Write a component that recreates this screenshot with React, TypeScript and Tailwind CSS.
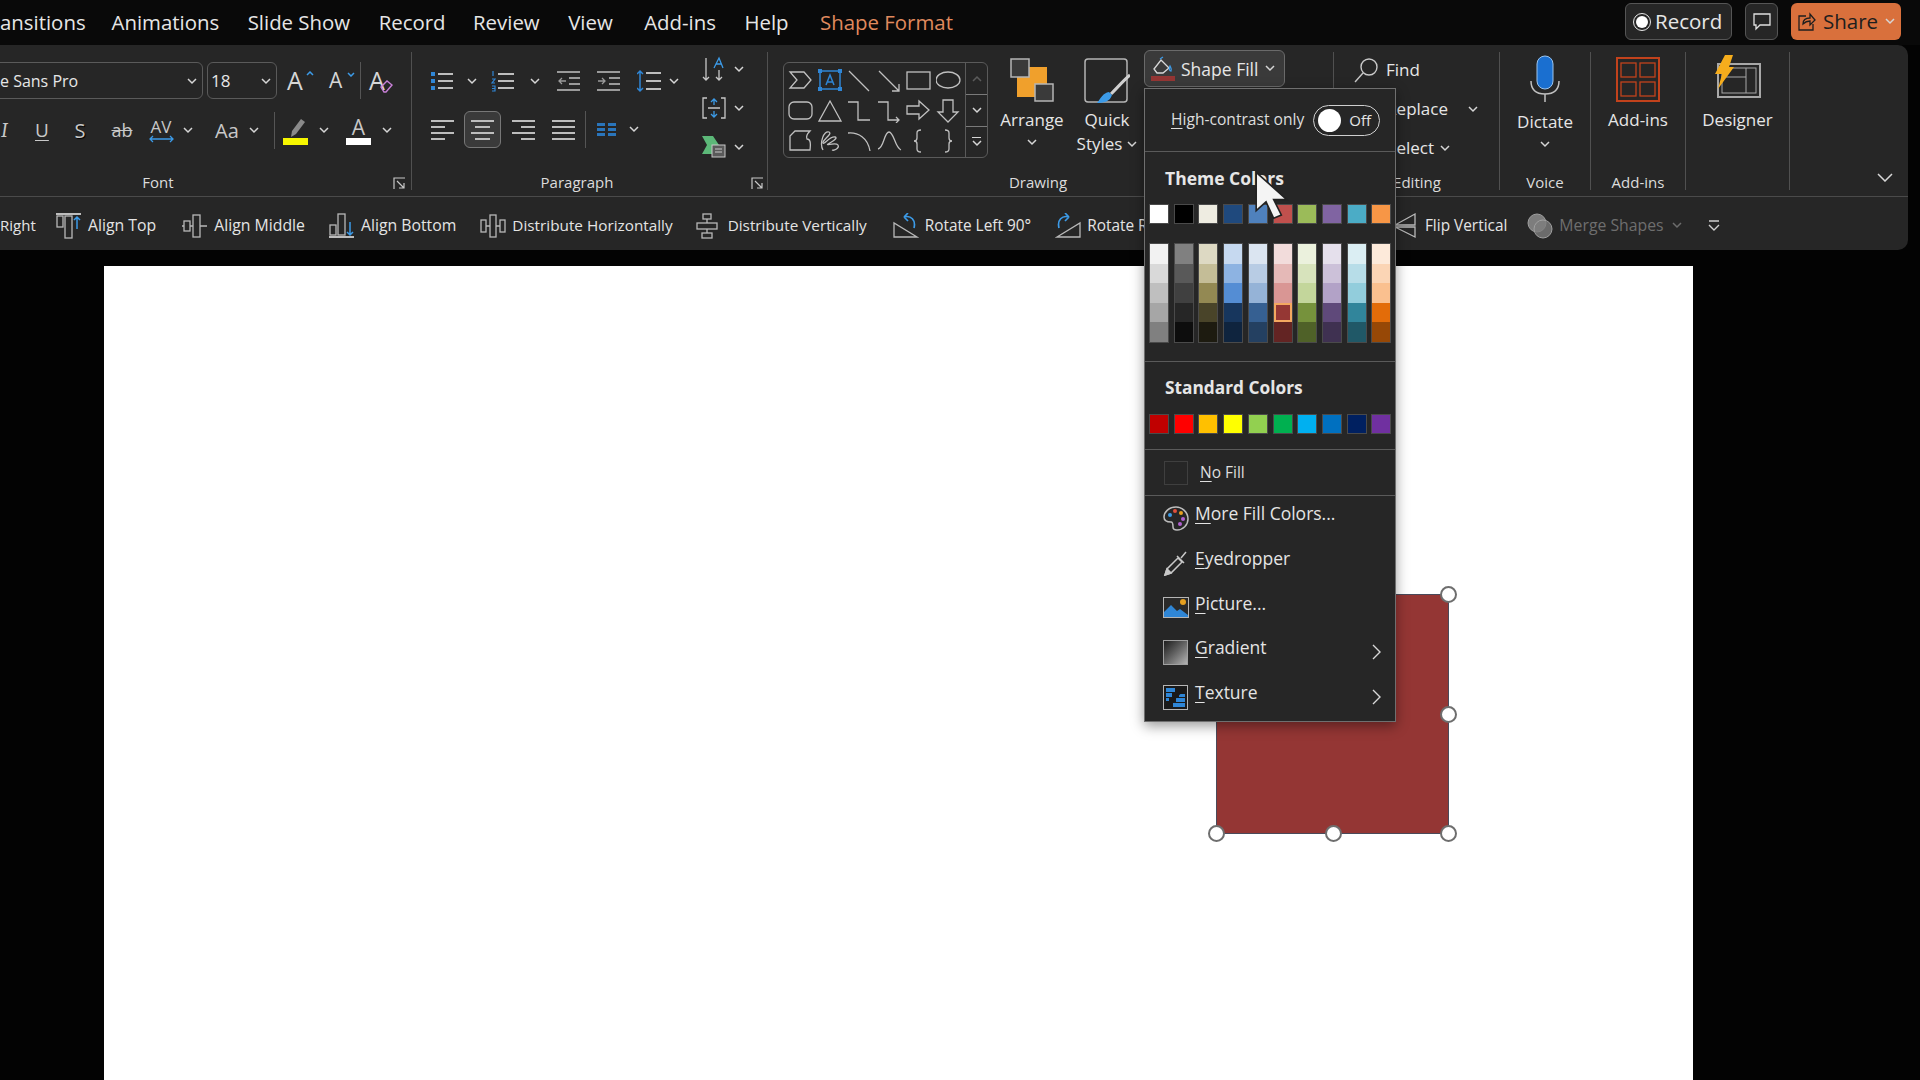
import { ReactNode } from "react";
import clsx from "clsx";

const Chev = ({ className }: { className?: string }) => (
  <svg width="10" height="7" viewBox="0 0 10 7" className={clsx("shrink-0", className)} fill="none" stroke="#d6d6d6" strokeWidth="1.5">
    <path d="M1 1l4 4 4-4" />
  </svg>
);

const Launcher = ({ className }: { className?: string }) => (
  <svg width="13" height="13" viewBox="0 0 13 13" className={clsx("absolute bottom-[0px]", className)} fill="none" stroke="#c8c8c8" strokeWidth="1.2">
    <path d="M1 12V1h11M4 4l7 7M11 6v5H6" />
  </svg>
);

const Group = ({ className, label, labelClass, children }: { className: string; label?: string; labelClass?: string; children: ReactNode }) => (
  <div className={clsx("relative h-[138px] shrink-0 border-r border-[#505050]", className)}>
    {children}
    {label && (
      <div className={clsx("absolute bottom-0 h-[16px] text-center text-[15px] leading-[16px] text-[#dcdcdc]", labelClass)}>{label}</div>
    )}
  </div>
);

const Lines = ({ rows }: { rows: [number, number][] }) => (
  <svg width="23" height="24" viewBox="0 0 23 24" stroke="#bdbdbd" strokeWidth="2" className="shrink-0">
    {rows.map(([a, b], i) => (
      <path key={i} d={`M${a} ${3 + i * 6}H${b}`} />
    ))}
  </svg>
);

const Bullets = () => (
  <svg width="24" height="24" viewBox="0 0 24 24" className="shrink-0">
    <path d="M0 3h4v4H0zM0 10h4v4H0zM0 17h4v4H0z" fill="#2f86d6" />
    <path d="M7 5h15M7 12h15M7 19h15" stroke="#bdbdbd" strokeWidth="2" />
  </svg>
);
const Numbers = () => (
  <svg width="24" height="24" viewBox="0 0 24 24" className="shrink-0">
    <path d="M2 2v5M1 10h3l-3 4h3M1 17h3v5H1M1 19.500h3" stroke="#2f86d6" strokeWidth="1.200" fill="none" />
    <path d="M7 5h16M7 12h16M7 19h16" stroke="#bdbdbd" strokeWidth="2" />
  </svg>
);
const Indent = ({ back }: { back?: boolean }) => (
  <svg width="23" height="24" viewBox="0 0 23 24" className="shrink-0" fill="none">
    <path d="M0 3h23M12 9h11M12 15h11M0 21h23" stroke="#9a9a9a" strokeWidth="2" />
    <path d={back ? "M9 12H2m3-3l-3 3 3 3" : "M1 12h7m-3-3l3 3-3 3"} stroke="#9a9a9a" strokeWidth="1.300" />
  </svg>
);
const LineSpacing = () => (
  <svg width="25" height="24" viewBox="0 0 25 24" className="shrink-0" fill="none">
    <path d="M3 2v20M0 5l3-3 3 3M0 19l3 3 3-3" stroke="#2f86d6" strokeWidth="1.500" />
    <path d="M9 4h15M9 12h15M9 20h15" stroke="#bdbdbd" strokeWidth="2" />
  </svg>
);

const Gallery: ReactNode[] = [
  <path d="M2 3h14l7 8-7 8H2l7-8z" />,
  <g>
    <rect x="2" y="2" width="20" height="18" stroke="#2f86d6" strokeWidth="1.500" />
    <path d="M0 0h4v4H0zM20 0h4v4h-4zM0 18h4v4H0zM20 18h4v4h-4z" fill="#2f86d6" stroke="none" />
    <path d="M8 16l4-10 4 10M9.500 13h5" stroke="#2f86d6" strokeWidth="1.500" />
  </g>,
  <path d="M2 2l20 20" />,
  <path d="M2 2l20 20m-7 0h7v-7" />,
  <rect x="1" y="3" width="23" height="17" />,
  <ellipse cx="12" cy="11" rx="12" ry="8" />,
  <rect x="1" y="3" width="23" height="17" rx="5" />,
  <path d="M12 2L1 22h22z" />,
  <path d="M1 3h10v18h12" />,
  <path d="M1 3h10v18h11m-3-3l3 3-3 3" />,
  <path d="M1 7h12V2l10 9-10 9v-5H1z" />,
  <path d="M7 1h10v12h5L12 23 2 13h5z" />,
  <path d="M2 21V7l5-5h15c-3 3-4 6-3 8 3 0 4 3 3 11z" />,
  <path d="M5 21C1 14 6 1 11 3c4 2-7 8-6 11 1 2 7-7 12-6 4 1-5 6-7 7-3 2 8-2 10 1 2 3-4 6-6 5" />,
  <path d="M1 4c10-1 20 5 22 18" />,
  <path d="M1 20C7 19 7 3 12 3s6 16 12 18" />,
  <path d="M15 1c-3 0-4 1-4 3v5c0 2-1 3-3 3 2 0 3 1 3 3v5c0 2 1 3 4 3" />,
  <path d="M9 1c3 0 4 1 4 3v5c0 2 1 3 3 3-2 0-3 1-3 3v5c0 2-1 3-4 3" />,
];

const toolIcons: Record<string, ReactNode> = {
  top: <><path d="M0 1h25" stroke="#bdbdbd" strokeWidth="2" /><rect x="1" y="3" width="6" height="11" /><rect x="9" y="3" width="7" height="22" /><path d="M21 16V4m-3 3l3-3 3 3" stroke="#3c9be8" strokeWidth="1.500" /></>,
  middle: <><path d="M0 13h25" /><rect x="2" y="8" width="6" height="10" fill="#262626" /><rect x="11" y="2" width="7" height="22" fill="#262626" /></>,
  bottom: <><path d="M0 24h25" stroke="#bdbdbd" strokeWidth="2" /><rect x="1" y="12" width="6" height="10" /><rect x="9" y="1" width="7" height="21" /><path d="M21 9v13m-3-3l3 3 3-3" stroke="#3c9be8" strokeWidth="1.500" /></>,
  dh: <><rect x="1" y="7" width="5" height="12" /><rect x="10" y="2" width="6" height="22" /><rect x="20" y="7" width="5" height="12" /><path d="M6 13h4m6 0h4" /></>,
  dv: <><rect x="7" y="1" width="8" height="5" /><rect x="1" y="10" width="20" height="6" /><rect x="6" y="20" width="10" height="5" /><path d="M11 6v4m0 6v4" /></>,
  rl: <><path d="M1 24L24 24 1 10z" /><path d="M11 4c7-2 12 3 10 11M11 4l4-4M11 4l4 4" stroke="#3c9be8" strokeWidth="1.700" /></>,
  rr: <><path d="M25 24L2 24 25 10z" /><path d="M14 4C7 2 2 7 4 15M14 4l-4-4M14 4l-4 4" stroke="#3c9be8" strokeWidth="1.700" /></>,
  fv: <><path d="M22 1L2 12h20zM22 24L2 14h20z" /></>,
};

const Tool = ({ icon, text, className, textClass = "text-[15.800px]" }: { icon: string; text: string; className: string; textClass?: string }) => (
  <div className={clsx("flex shrink-0 items-center gap-[6px]", className)}>
    <svg width="26" height="26" viewBox="0 0 26 26" fill="none" stroke="#b8b8b8" strokeWidth="1.300" className="shrink-0">
      {toolIcons[icon]}
    </svg>
    <span className={clsx("whitespace-nowrap text-[#e4e4e4]", textClass)}>{text}</span>
  </div>
);

const base = ["bg-[#ffffff]", "bg-[#000000]", "bg-[#eeece1]", "bg-[#1f497d]", "bg-[#4f81bd]", "bg-[#c0504d]", "bg-[#9bbb59]", "bg-[#8064a2]", "bg-[#4bacc6]", "bg-[#f79646]"];
const standard = ["bg-[#c00000]", "bg-[#ff0000]", "bg-[#ffc000]", "bg-[#ffff00]", "bg-[#92d050]", "bg-[#00b050]", "bg-[#00b0f0]", "bg-[#0070c0]", "bg-[#002060]", "bg-[#7030a0]"];
const shades = [
  ["bg-[#f2f2f2]", "bg-[#d9d9d9]", "bg-[#bfbfbf]", "bg-[#a6a6a6]", "bg-[#808080]"],
  ["bg-[#808080]", "bg-[#595959]", "bg-[#404040]", "bg-[#262626]", "bg-[#0d0d0d]"],
  ["bg-[#ddd9c3]", "bg-[#c4bd97]", "bg-[#938953]", "bg-[#494429]", "bg-[#1d1b10]"],
  ["bg-[#c6d9f0]", "bg-[#8db3e2]", "bg-[#548dd4]", "bg-[#17365d]", "bg-[#0f243e]"],
  ["bg-[#dbe5f1]", "bg-[#b8cce4]", "bg-[#95b3d7]", "bg-[#366092]", "bg-[#244061]"],
  ["bg-[#f2dcdb]", "bg-[#e5b9b7]", "bg-[#d99694]", "bg-[#953734]", "bg-[#632423]"],
  ["bg-[#ebf1dd]", "bg-[#d7e3bc]", "bg-[#c3d69b]", "bg-[#76923c]", "bg-[#4f6128]"],
  ["bg-[#e5e0ec]", "bg-[#ccc1d9]", "bg-[#b2a2c7]", "bg-[#5f497a]", "bg-[#3f3151]"],
  ["bg-[#dbeef3]", "bg-[#b7dde8]", "bg-[#92cddc]", "bg-[#31859b]", "bg-[#205867]"],
  ["bg-[#fdeada]", "bg-[#fbd5b5]", "bg-[#fac08f]", "bg-[#e36c09]", "bg-[#974806]"],
];

const Swatches = ({ colors }: { colors: string[] }) => (
  <div className="ml-[5px] grid w-[247px] grid-cols-10">
    {colors.map((c) => (
      <div key={c} className={clsx("h-[18px] w-[18px] outline outline-1 outline-[#4a4a4a]", c)} />
    ))}
  </div>
);

const Item = ({ icon, letter, rest, arrow }: { icon: ReactNode; letter: string; rest: string; arrow?: boolean }) => (
  <div className="flex h-[44.700px] items-center pl-[18px] pr-[13px]">
    <span className="mt-[6px] flex h-[25px] w-[26px] shrink-0 items-center">{icon}</span>
    <span className="ml-[6px] -translate-y-[2px] whitespace-nowrap text-[17.500px] text-[#e4e4e4]">
      <span className="underline underline-offset-[3px]">{letter}</span>
      {rest}
    </span>
    {arrow && (
      <svg width="10" height="16" viewBox="0 0 10 16" className="ml-auto mt-[5px]" fill="none" stroke="#d8d8d8" strokeWidth="1.400">
        <path d="M1 1l7 7-7 7" />
      </svg>
    )}
  </div>
);

const Handle = ({ className }: { className: string }) => (
  <div className={clsx("absolute h-[17px] w-[17px] rounded-full border-2 border-[#6e6e6e] bg-white", className)} />
);

export default function App() {
  return (
    <div className="relative flex h-screen w-full flex-col overflow-hidden bg-[#030303] font-['Open_Sans','Liberation_Sans',sans-serif] text-[#e6e6e6]">
      {/* tabs */}
      <div className="flex h-[45px] shrink-0 items-center bg-[#090909] text-[20.400px] leading-none">
        <nav className="flex items-center gap-[28.500px] whitespace-nowrap pb-[1px]">
          <span className="w-[83px]">ansitions</span>
          <span>Animations</span>
          <span>Slide Show</span>
          <span className="-mr-[1px]">Record</span>
          <span>Review</span>
          <span>View</span>
          <span className="ml-[3px]">Add-ins</span>
          <span>Help</span>
          <span className="ml-[3px] text-[#e08a5e]">Shape Format</span>
        </nav>
        <div className="ml-auto flex items-center pb-[2px] pr-[19px]">
          <div className="flex h-[37px] w-[107px] items-center gap-[4px] rounded-[6px] border border-[#555] bg-[#262626] pl-[7px]">
            <span className="flex h-[18px] w-[18px] items-center justify-center rounded-full border border-[#e6e6e6]">
              <span className="h-[12px] w-[12px] rounded-full bg-white" />
            </span>
            <span className="text-[20.500px] leading-none">Record</span>
          </div>
          <div className="ml-[13px] flex h-[37px] w-[33px] items-center justify-center rounded-[6px] border border-[#555] bg-[#262626]">
            <svg width="18" height="18" viewBox="0 0 18 18" fill="none" stroke="#e0e0e0" strokeWidth="1.300">
              <path d="M1 1h16v11H7l-4 4v-4H1z" />
            </svg>
          </div>
          <div className="ml-[13px] flex h-[37px] w-[110px] items-center rounded-[6px] bg-[#d9703c] pl-[7px] text-[#1e1e1e]">
            <svg width="18" height="20" viewBox="0 0 18 20" fill="none" stroke="#1e1e1e" strokeWidth="1.300">
              <path d="M8 4H1v14h14v-6M5 12c0-4 3-6 7-6V2l5 6-5 5V9c-3 0-5 1-7 3z" />
            </svg>
            <span className="ml-[7px] text-[20.500px] leading-none">Share</span>
            <Chev className="ml-[7px]" />
          </div>
        </div>
      </div>

      {/* ribbon */}
      <div className="mr-[12px] h-[205px] shrink-0 overflow-hidden rounded-r-[10px] bg-[#262626]">
        <div className="relative flex h-[152px] border-b border-[#4a4a4a] pt-[7px]">
          <Group className="w-[412px]" label="Font" labelClass="left-[128px] w-[60px]">
            <div className="mt-[10px] flex h-[37px] items-center">
              <div className="-ml-[10px] flex h-[37px] w-[213px] items-center rounded-[6px] border border-[#5a5a5a] pl-[9px] pr-[5px] pt-[1px] text-[16px]">
                <span className="whitespace-nowrap">e Sans Pro</span>
                <Chev className="ml-auto" />
              </div>
              <div className="ml-[4px] flex h-[37px] w-[70px] items-center rounded-[6px] border border-[#5a5a5a] pl-[3px] pr-[5px] pt-[1px] text-[17px]">
                18
                <Chev className="ml-auto" />
              </div>
              <div className="relative ml-[10px] w-[24px] text-[25px] leading-none text-[#d6d6d6]">
                A
                <svg width="8" height="5" viewBox="0 0 8 5" className="absolute -right-[3px] top-[3px]" fill="none" stroke="#3c9be8" strokeWidth="1.500"><path d="M1 4l3-3 3 3" /></svg>
              </div>
              <div className="relative ml-[18px] w-[21px] text-[21px] leading-none text-[#d6d6d6]">
                A
                <svg width="8" height="5" viewBox="0 0 8 5" className="absolute -right-[5px] top-[2px]" fill="none" stroke="#3c9be8" strokeWidth="1.500"><path d="M1 1l3 3 3-3" /></svg>
              </div>
              <div className="ml-[10px] h-[37px] w-px bg-[#555]" />
              <div className="relative ml-[8px] w-[24px] text-[25px] leading-none text-[#d6d6d6]">
                A
                <svg width="14" height="14" viewBox="0 0 14 14" className="absolute -right-[1px] bottom-[0px]" fill="none" stroke="#c77fd6" strokeWidth="1.400"><path d="M1 8l6-6 5 4-6 7H4z" /></svg>
              </div>
            </div>
            <div className="mt-[13px] flex h-[37px] items-center text-[#c8c8c8]">
              <span className="ml-[1px] w-[8px] font-serif text-[20px] italic">I</span>
              <span className="ml-[26px] w-[12px] text-center text-[19px] underline underline-offset-[3px]">U</span>
              <span className="ml-[27px] w-[12px] text-center text-[20px] [text-shadow:1px_1px_1px_#000]">S</span>
              <span className="ml-[24px] w-[24px] text-center text-[18px] line-through">ab</span>
              <div className="ml-[14px] flex w-[26px] flex-col items-center">
                <span className="text-[17px] leading-[17px]">AV</span>
                <svg width="25" height="8" viewBox="0 0 25 8" fill="none" stroke="#3c9be8" strokeWidth="1.300"><path d="M1 4h23M4 1L1 4l3 3M21 1l3 3-3 3" /></svg>
              </div>
              <Chev className="ml-[9px]" />
              <span className="ml-[22px] w-[26px] text-[20px]">Aa</span>
              <Chev className="ml-[8px]" />
              <div className="ml-[15px] h-[37px] w-px bg-[#555]" />
              <div className="ml-[8px] flex w-[25px] flex-col items-center">
                <svg width="22" height="21" viewBox="0 0 22 21" fill="#8a8a8a"><path d="M6 20l1-6L16 2l4 3-9 12z" /></svg>
                <div className="h-[7px] w-[25px] bg-[#f6f600]" />
              </div>
              <Chev className="ml-[11px]" />
              <div className="ml-[17px] flex w-[25px] flex-col items-center">
                <span className="text-[21px] leading-[21px]">A</span>
                <div className="h-[7px] w-[25px] bg-white" />
              </div>
              <Chev className="ml-[11px]" />
            </div>
            <Launcher className="left-[393px]" />
          </Group>

          <Group className="w-[356px]" label="Paragraph" labelClass="left-[115px] w-[100px]">
            <div className="flex h-[97px]">
              <div className="ml-[19px] w-[262px]">
                <div className="mt-[17px] flex h-[24px] items-center">
                  <Bullets />
                  <Chev className="ml-[12px]" />
                  <div className="ml-[14px]"><Numbers /></div>
                  <Chev className="ml-[15px]" />
                  <div className="ml-[17px]"><Indent back /></div>
                  <div className="ml-[17px]"><Indent /></div>
                  <div className="ml-[17px]"><LineSpacing /></div>
                  <Chev className="ml-[7px]" />
                </div>
                <div className="mt-[18px] flex h-[37px] items-center">
                  <Lines rows={[[0, 23], [0, 14], [0, 23], [0, 14]]} />
                  <div className="ml-[10px] flex h-[37px] w-[37px] items-center justify-center rounded-[6px] border border-[#777] bg-[#3a3a3a]">
                    <Lines rows={[[0, 23], [4, 19], [0, 23], [4, 19]]} />
                  </div>
                  <div className="ml-[11px]"><Lines rows={[[0, 23], [9, 23], [0, 23], [9, 23]]} /></div>
                  <div className="ml-[17px]"><Lines rows={[[0, 23], [0, 23], [0, 23], [0, 23]]} /></div>
                  <div className="ml-[10px] h-[37px] w-px bg-[#555]" />
                  <svg width="20" height="14" viewBox="0 0 20 14" className="ml-[11px]" fill="#2a75bb">
                    <path d="M0 0h8v3H0zM0 5h8v3H0zM0 10h8v3H0zM11 0h8v3h-8zM11 5h8v3h-8zM11 10h8v3h-8z" />
                  </svg>
                  <Chev className="ml-[12px]" />
                </div>
              </div>
              <div className="ml-[9px] flex w-[60px] flex-col">
                <div className="mt-[4px] flex h-[26px] items-center">
                  <svg width="22" height="26" viewBox="0 0 22 26" fill="none">
                    <path d="M4 2v22M1 21l3 3 3-3M17 14v10M14 21l3 3 3-3" stroke="#c8c8c8" strokeWidth="1.300" />
                    <path d="M12 12l5-10 4 10M13.500 8h6" stroke="#3c9be8" strokeWidth="1.300" />
                  </svg>
                  <Chev className="ml-[10px]" />
                </div>
                <div className="mt-[15px] flex h-[22px] items-center">
                  <svg width="24" height="22" viewBox="0 0 24 22" fill="none">
                    <path d="M5 1H1v20h4M19 1h4v20h-4M6 11h12" stroke="#c8c8c8" strokeWidth="1.300" />
                    <path d="M12 2v6M9 5l3-3 3 3M12 20v-6M9 17l3 3 3-3" stroke="#3c9be8" strokeWidth="1.300" />
                  </svg>
                  <Chev className="ml-[8px]" />
                </div>
                <div className="mt-[17px] flex h-[22px] items-center">
                  <svg width="24" height="22" viewBox="0 0 24 22" fill="none">
                    <path d="M0 0h11l6 9-6 9H0l5-9z" fill="#5cb878" />
                    <rect x="10" y="9" width="13" height="12" fill="#5a5a5a" stroke="#c8c8c8" />
                    <path d="M13 13h7M13 16h7" stroke="#c8c8c8" />
                  </svg>
                  <Chev className="ml-[8px]" />
                </div>
              </div>
            </div>
            <Launcher className="left-[339px]" />
          </Group>

          <Group className="w-[566px]" label="Drawing" labelClass="left-[220px] w-[100px]">
            <div className="mt-[10px] flex h-[96px]">
              <div className="ml-[15px] flex h-[96px] w-[205px] rounded-[6px] border border-[#5a5a5a]">
                <div className="grid w-[183px] grid-cols-6 content-center gap-y-[6px] pl-[4px] pt-[2px]">
                  {Gallery.map((s, i) => (
                    <svg key={i} width="25" height="24" viewBox="0 0 25 24" fill="none" stroke="#c0c0c0" strokeWidth="1.300">
                      {s}
                    </svg>
                  ))}
                </div>
                <div className="flex w-[22px] flex-col border-l border-[#5a5a5a]">
                  <div className="flex h-[31px] items-center justify-center"><Chev className="rotate-180 opacity-30" /></div>
                  <div className="flex h-[33px] items-center justify-center border-y border-[#7a7a7a]"><Chev /></div>
                  <div className="flex flex-1 flex-col items-center justify-center gap-[2px]"><div className="h-px w-[9px] bg-[#d6d6d6]" /><Chev /></div>
                </div>
              </div>
              <div className="ml-[22px] flex w-[44px] flex-col items-center">
                <svg width="44" height="44" viewBox="0 0 44 44" className="-mt-[4px] shrink-0">
                  <rect x="7" y="9" width="30" height="30" fill="#f0a02c" />
                  <rect x="1" y="1" width="18" height="18" fill="#3a3a3a" stroke="#b5b5b5" strokeWidth="1.500" />
                  <rect x="25" y="26" width="18" height="17" fill="#3a3a3a" stroke="#b5b5b5" strokeWidth="1.500" />
                </svg>
                <span className="mt-[8px] text-[17px] leading-[20px]">Arrange</span>
                <Chev className="mt-[9px]" />
              </div>
              <div className="ml-[30px] flex w-[46px] flex-col items-center">
                <svg width="46" height="46" viewBox="0 0 46 46" className="-mt-[4px] shrink-0" fill="none">
                  <rect x="1" y="1" width="42" height="43" rx="3" stroke="#b5b5b5" strokeWidth="1.500" />
                  <path d="M46 17C40 22 33 30 27 36" stroke="#d0d0d0" strokeWidth="3" />
                  <path d="M13 45c6 0 13-1 15-8l-3-3c-6 1-8 6-12 11z" fill="#3c9be8" />
                </svg>
                <span className="mt-[6px] text-[17px] leading-[20px]">Quick</span>
                <span className="mt-[4px] flex items-center gap-[5px] whitespace-nowrap text-[17px] leading-[20px]">Styles<Chev /></span>
              </div>
            </div>
          </Group>

          <Group className="w-[166px]" label="Editing" labelClass="left-[53px] w-[60px]">
            <div className="ml-[20px] mt-[4px] flex h-[28px] items-center">
              <svg width="24" height="25" viewBox="0 0 24 25" fill="none" stroke="#c8c8c8" strokeWidth="1.400"><circle cx="15" cy="9" r="8" /><path d="M9 15l-8 9" /></svg>
              <span className="ml-[8px] text-[17px]">Find</span>
            </div>
            <div className="mt-[13px] flex h-[24px] items-center justify-end pr-[21px] text-[17px]">Replace<Chev className="ml-[20px]" /></div>
            <div className="mt-[15px] flex h-[24px] items-center justify-end pr-[49px] text-[17px]">Select<Chev className="ml-[6px]" /></div>
          </Group>

          <Group className="w-[91px]" label="Voice" labelClass="left-0 w-[90px]">
            <div className="flex flex-col items-center">
              <svg width="30" height="48" viewBox="0 0 30 48" className="mt-[3px]" fill="none">
                <rect x="7" y="1" width="16" height="33" rx="8" fill="#1a6fd0" stroke="#9cc4ec" />
                <path d="M1 26c0 10 6 13 14 13s14-3 14-13M15 39v8" stroke="#c0c0c0" strokeWidth="1.500" />
              </svg>
              <span className="mt-[9px] text-[17px] leading-[20px]">Dictate</span>
              <Chev className="mt-[9px]" />
            </div>
          </Group>

          <Group className="w-[95px]" label="Add-ins" labelClass="left-0 w-[94px]">
            <div className="flex flex-col items-center">
              <svg width="44" height="45" viewBox="0 0 44 45" className="mt-[5px]" fill="none" stroke="#c2421c">
                <rect x="1" y="1" width="42" height="43" strokeWidth="2" />
                <rect x="5" y="6" width="15" height="14" strokeWidth="1.300" />
                <rect x="24" y="6" width="15" height="14" strokeWidth="1.300" />
                <rect x="5" y="25" width="15" height="14" strokeWidth="1.300" />
                <rect x="24" y="25" width="15" height="14" strokeWidth="1.300" />
              </svg>
              <span className="mt-[8px] text-[17px] leading-[20px]">Add-ins</span>
            </div>
          </Group>

          <Group className="w-[104px]">
            <div className="flex flex-col items-center">
              <svg width="48" height="44" viewBox="0 0 48 44" className="mt-[3px]" fill="none">
                <rect x="4" y="9" width="42" height="33" stroke="#a8a8a8" strokeWidth="2" />
                <rect x="8" y="13" width="34" height="25" stroke="#a8a8a8" />
                <path d="M32 13v25M8 22h24" stroke="#a8a8a8" />
                <path d="M11 0h8l-4 12h5L4 34l4-15H1z" fill="#f6ad1c" />
              </svg>
              <span className="mt-[11px] text-[17px] leading-[20px]">Designer</span>
            </div>
          </Group>
          <svg width="16" height="9" viewBox="0 0 16 9" className="absolute right-[15px] top-[128px]" fill="none" stroke="#d8d8d8" strokeWidth="1.500"><path d="M1 1l7 7 7-7" /></svg>
        </div>

        <div className="flex h-[53px] items-center pt-[4px]">
          <span className="w-[32px] text-[15px] text-[#e4e4e4]">Right</span>
          <Tool icon="top" text="Align Top" className="ml-[24px]" />
          <Tool icon="middle" text="Align Middle" className="ml-[26px]" />
          <Tool icon="bottom" text="Align Bottom" className="ml-[24px]" />
          <Tool icon="dh" text="Distribute Horizontally" className="ml-[24px]" textClass="text-[15.300px]" />
          <Tool icon="dv" text="Distribute Vertically" className="ml-[23px]" textClass="text-[15.300px]" />
          <Tool icon="rl" text="Rotate Left 90°" className="ml-[26px]" textClass="text-[15.400px]" />
          <Tool icon="rr" text="Rotate Right 90°" className="ml-[24px]" textClass="text-[15.400px]" />
          <Tool icon="fv" text="Flip Vertical" className="ml-[190px]" textClass="text-[15.400px]" />
          <div className="ml-[20px] flex shrink-0 items-center gap-[6px] text-[15.800px] text-[#6e6e6e]">
            <svg width="26" height="26" viewBox="0 0 26 26" fill="#7d7d7d" stroke="#a0a0a0"><circle cx="10" cy="10" r="9" /><circle cx="16" cy="16" r="9" fillOpacity="0.800" /></svg>
            <span className="whitespace-nowrap">Merge Shapes</span>
            <Chev className="ml-[2px] opacity-40" />
          </div>
          <svg width="12" height="12" viewBox="0 0 12 12" className="ml-[26px]" fill="none" stroke="#d0d0d0" strokeWidth="1.400"><path d="M1 1h10M1 5l5 5 5-5" /></svg>
        </div>
      </div>

      {/* slide */}
      <div className="min-h-0 flex-1 pl-[104px] pt-[16px]">
        <div className="relative h-full w-[1589px] bg-white">
          <div className="absolute left-[1112px] top-[328px] h-[240px] w-[233px] border border-[#4a4a5a] bg-[#943634]">
            <Handle className="-left-[9px] -top-[9px]" />
            <Handle className="-right-[9px] -top-[9px]" />
            <Handle className="-right-[9px] top-[111px]" />
            <Handle className="-left-[9px] -bottom-[9px]" />
            <Handle className="left-[108px] -bottom-[9px]" />
            <Handle className="-right-[9px] -bottom-[9px]" />
          </div>
        </div>
      </div>

      {/* shape fill button + dropdown */}
      <div className="absolute left-[1144px] top-[50px] flex h-[37px] w-[141px] items-center rounded-[6px] border border-[#6a6a6a] bg-[#3a3a3a]">
        <svg width="24" height="25" viewBox="0 0 24 25" className="ml-[6px]" fill="none">
          <path d="M3 13l7-9 8 8-6 5H6z" stroke="#d8d8d8" strokeWidth="1.300" />
          <path d="M9 3l3-2M19 10c1 2 2 3 1 5-2 0-2-3-1-5z" stroke="#3c9be8" strokeWidth="1.300" />
          <rect x="0" y="20" width="24" height="5" fill="#943634" />
        </svg>
        <span className="ml-[6px] mt-[2px] whitespace-nowrap text-[17.500px]">Shape Fill</span>
        <Chev className="ml-[7px]" />
      </div>

      <div className="absolute left-[1144px] top-[88px] flex h-[634px] w-[252px] flex-col border border-[#6f6f6f] bg-[#262626] shadow-[0_4px_12px_rgba(0,0,0,0.4)]">
        <div className="flex h-[63px] shrink-0 items-center border-b border-[#5a5a5a] pl-[26px]">
          <span className="whitespace-nowrap text-[15.600px] text-[#dedede]">
            <span className="underline underline-offset-[3px]">H</span>igh-contrast only
          </span>
          <div className="ml-[9px] flex h-[31px] w-[67px] items-center rounded-full border border-[#cfcfcf] pl-[4px]">
            <span className="h-[23px] w-[23px] rounded-full bg-white" />
            <span className="ml-[8px] text-[15px]">Off</span>
          </div>
        </div>
        <div className="h-[210px] shrink-0 border-b border-[#5a5a5a]">
          <div className="ml-[20px] mt-[15px] h-[22px] text-[17.500px] font-bold leading-[22px]">Theme Colors</div>
          <div className="mt-[16px]"><Swatches colors={base} /></div>
          <div className="ml-[5px] mt-[21px] grid w-[247px] grid-cols-10">
            {shades.map((col, c) => (
              <div key={c} className="w-[18px] outline outline-1 outline-[#4a4a4a]">
                {col.map((s, r) => (
                  <div key={r} className={clsx("h-[19.500px]", s, c === 5 && r === 3 && "border-2 border-[#f4a860]")} />
                ))}
              </div>
            ))}
          </div>
        </div>
        <div className="h-[88px] shrink-0 border-b border-[#5a5a5a]">
          <div className="ml-[20px] mt-[15px] h-[22px] text-[17.300px] font-bold leading-[22px]">Standard Colors</div>
          <div className="mt-[16px]"><Swatches colors={standard} /></div>
        </div>
        <div className="flex h-[46px] shrink-0 items-center border-b border-[#5a5a5a] pl-[19px]">
          <div className="h-[24px] w-[24px] border border-[#3f3f3f]" />
          <span className="ml-[12px] mt-[1px] text-[15.500px] text-[#dedede]"><span className="underline underline-offset-[3px]">N</span>o Fill</span>
        </div>
        <div className="-mt-[3px] flex flex-col">
          <Item letter="M" rest="ore Fill Colors..." icon={
            <svg width="26" height="25" viewBox="0 0 26 25" fill="none">
              <path d="M13 1C6 1 1 6 1 11c0 4 4 5 7 5 2 0 2 3 2 5 0 2 2 3 4 3 6 0 11-5 11-11 0-7-6-12-12-12z" stroke="#bdbdbd" strokeWidth="1.500" />
              <circle cx="7" cy="9" r="2" fill="#3c9be8" /><circle cx="12" cy="5" r="2" fill="#e0503c" /><circle cx="18" cy="7" r="2" fill="#e6a020" /><circle cx="20" cy="13" r="2" fill="#b060d0" /><circle cx="17" cy="18" r="2" fill="#b060d0" />
            </svg>
          } />
          <Item letter="E" rest="yedropper" icon={
            <svg width="26" height="25" viewBox="0 0 26 25" fill="none" stroke="#c8c8c8" strokeWidth="1.500">
              <path d="M2 24l2-6L15 7l4 4L8 22zM14 5l7 7M18 7l5-6" />
              <path d="M2 24l2-6 4 4z" fill="#c8c8c8" />
            </svg>
          } />
          <Item letter="P" rest="icture..." icon={
            <svg width="26" height="21" viewBox="0 0 26 21">
              <rect x="0.500" y="0.500" width="25" height="20" fill="#2a2a2a" stroke="#b5b5b5" />
              <path d="M1 20v-5l7-7 6 6 3-2 8 6v2z" fill="#2f86d6" />
              <circle cx="20" cy="5" r="3" fill="#e6a020" />
            </svg>
          } />
          <Item letter="G" rest="radient" arrow icon={
            <div className="h-[25px] w-[25px] border border-[#a0a0a0] bg-gradient-to-br from-[#1e1e1e] to-[#b4b4b4]" />
          } />
          <Item letter="T" rest="exture" arrow icon={
            <svg width="25" height="25" viewBox="0 0 25 25">
              <rect x="0.500" y="0.500" width="24" height="24" fill="#1a1a1a" stroke="#b5b5b5" />
              <path d="M3 3h9v4H3zM3 8h6v4H3zM3 13h3v3H3zM16 9h6v3h-6zM13 13h9v4h-9zM10 18h12v4H10z" fill="#2f86d6" />
              <path d="M3 22L22 3" stroke="#1a1a1a" strokeWidth="2" />
            </svg>
          } />
        </div>
      </div>

      {/* mouse pointer */}
      <svg width="35" height="53" viewBox="0 0 32 48" className="absolute left-[1254px] top-[171px]">
        <path d="M2 1v35l9-8 7 15 7-3-7-14h12z" fill="#f4f4f4" stroke="#222" strokeWidth="1.500" />
      </svg>
    </div>
  );
}
